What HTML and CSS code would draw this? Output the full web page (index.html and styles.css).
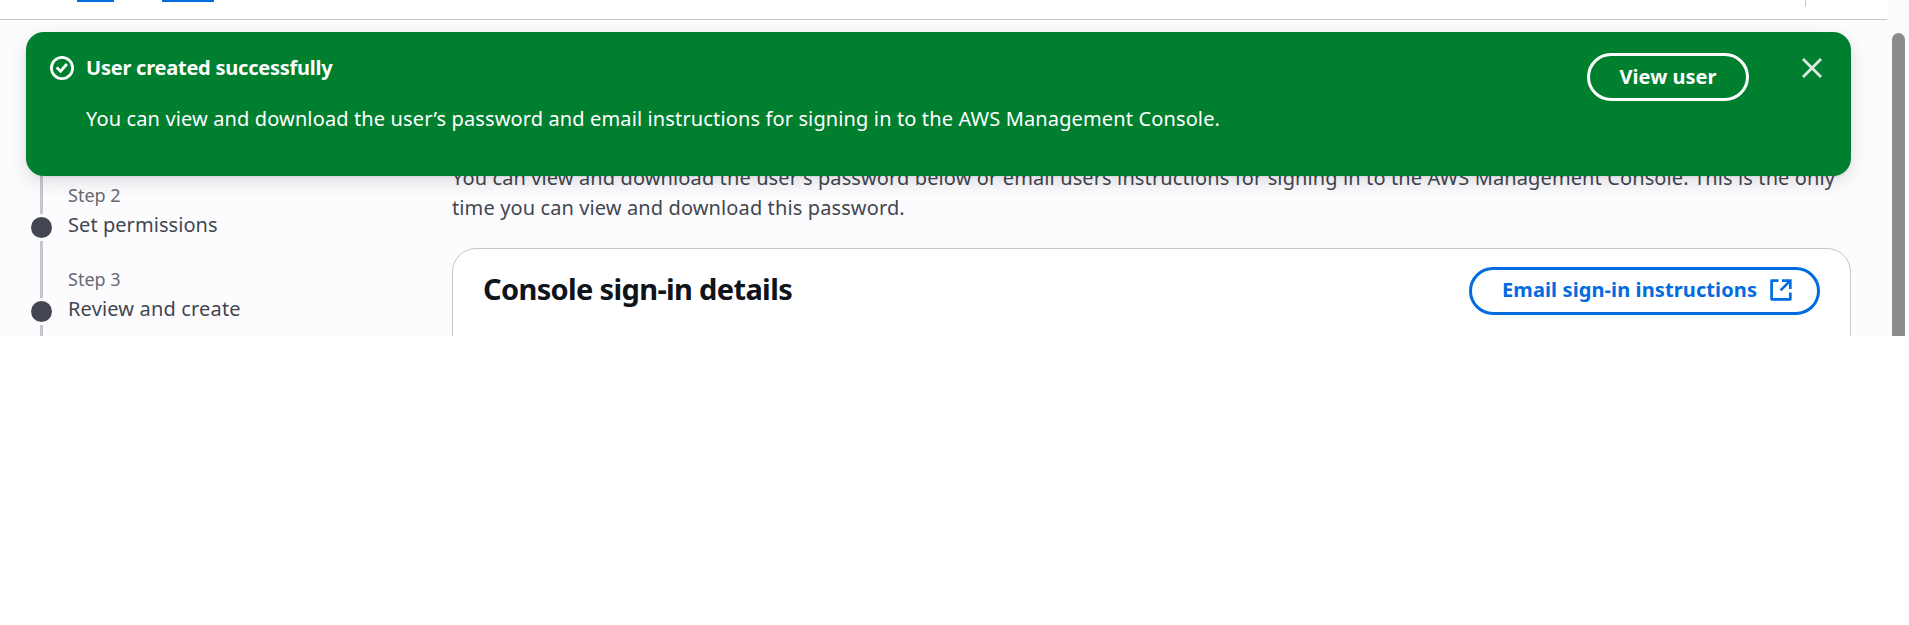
FILE: index.html
```html
<!DOCTYPE html>
<html lang="en">
<head>
<meta charset="utf-8">
<title>Create user</title>
<link rel="stylesheet" href="styles.css">
</head>
<body>
<div class="app">
  <div class="view">
    <header class="topbar">
      <div class="crumbs"><span class="underline underline-short"></span><span class="underline underline-long"></span></div>
      <span class="divider"></span>
    </header>
    <div class="content">
      <nav class="steps">
        <div class="step">
          <div class="marker"><span class="line"></span><span class="dot"></span></div>
          <div class="step-text"><span class="step-label">Step 2</span><span class="step-title">Set permissions</span></div>
        </div>
        <div class="step">
          <div class="marker"><span class="line"></span><span class="dot"></span></div>
          <div class="step-text"><span class="step-label">Step 3</span><span class="step-title step-title-wide">Review and create</span></div>
        </div>
        <div class="step">
          <div class="marker"><span class="line"></span></div>
        </div>
      </nav>
      <main class="main">
        <p class="intro">You can view and download the user's password below or email users instructions for signing in to the AWS Management Console. This is the only<br>time you can view and download this password.</p>
        <section class="card">
          <h2 class="card-title">Console sign-in details</h2>
          <button class="button button-link">
            <span>Email sign-in instructions</span>
            <svg class="icon-external" viewBox="0 0 24 24" width="24" height="24" fill="none" stroke="currentColor" stroke-width="2.7">
              <path d="M9.6 2.6H2.6V21.4H21.4V14.4" stroke-linejoin="round"/>
              <path d="M13 2.6H21.4V11M21.4 2.6L11.6 12.4"/>
            </svg>
          </button>
        </section>
      </main>
    </div>
    <div class="flash">
      <svg class="icon-success" viewBox="0 0 24 24" width="24" height="24" fill="none" stroke="currentColor">
        <circle cx="12" cy="12" r="10.6" stroke-width="2.7"/>
        <path d="M6.7 11.5L10.6 15.2L16.9 8" stroke-width="2.8"/>
      </svg>
      <div class="flash-text">
        <strong class="flash-title">User created successfully</strong>
        <span class="flash-message">You can view and download the user’s password and email instructions for signing in to the AWS Management Console.</span>
      </div>
      <button class="button button-flash">View user</button>
      <svg class="icon-close" viewBox="0 0 20 20" width="20" height="20" fill="none" stroke="currentColor" stroke-width="2.8">
        <path d="M1 1L19 19M19 1L1 19"/>
      </svg>
    </div>
  </div>
  <div class="scrollbar"><div class="thumb"></div></div>
</div>
</body>
</html>
```
FILE: styles.css
```css
* {
  box-sizing: border-box;
}

body {
  margin: 0;
  background: #fff;
  color: #424650;
  font: 20px/30px "Noto Sans", sans-serif;
}

.app {
  display: flex;
  height: 336px;
  overflow: hidden;
  background: #fcfcfe;
}

.view {
  position: relative;
  width: 1887px;
}

.topbar {
  display: flex;
  justify-content: space-between;
  height: 20px;
  padding: 0 81px 0 77px;
  background: #fff;
  border-bottom: 1px solid #c6c6cd;
}

.crumbs {
  display: flex;
  gap: 48px;
}

.underline {
  height: 2px;
  background: #006ce0;
}

.underline-short {
  width: 37px;
}

.underline-long {
  width: 52px;
}

.divider {
  width: 1px;
  height: 7px;
  background: #c6c6cd;
}

.content {
  display: flex;
  padding: 137px 36px 0 31px;
}

.steps {
  width: 421px;
}

.step {
  display: flex;
  gap: 16px;
  height: 84px;
}

.marker {
  display: flex;
  flex-direction: column;
  align-items: center;
  gap: 3px;
  width: 21px;
}

.line {
  width: 3px;
  height: 57px;
  background: #c6c6cd;
}

.dot {
  width: 21px;
  height: 21px;
  border-radius: 50%;
  background: #424650;
}

.step-text {
  display: flex;
  flex-direction: column;
  gap: 1px;
  padding-top: 25px;
}

.step-label {
  color: #656871;
  font-size: 18px;
  line-height: 27px;
  letter-spacing: 0;
}

.step-title {
  letter-spacing: 0.06px;
}

.step-title-wide {
  letter-spacing: 0.16px;
}

.main {
  width: 1399px;
  padding-top: 6px;
}

.intro {
  margin: 0 0 25px;
  letter-spacing: 0.115px;
  white-space: nowrap;
}

.card {
  display: flex;
  justify-content: space-between;
  align-items: flex-start;
  height: 200px;
  padding: 18px 30px;
  background: #fff;
  border: 1px solid #c6c6cd;
  border-radius: 24px;
}

.card-title {
  margin: 3px 0 0;
  color: #0f141a;
  font-size: 29px;
  line-height: 38px;
  letter-spacing: -0.65px;
}

.button {
  display: flex;
  align-items: center;
  height: 48px;
  margin: 0;
  border: 3px solid currentColor;
  border-radius: 30px;
  background: transparent;
  font: 700 20px/30px "Noto Sans", sans-serif;
  white-space: nowrap;
}

.button-link {
  gap: 12px;
  width: 351px;
  padding: 0 24px 2px 30px;
  color: #006ce0;
  letter-spacing: 0.11px;
}

.flash {
  position: absolute;
  top: 32px;
  left: 26px;
  display: flex;
  align-items: flex-start;
  width: 1825px;
  height: 144px;
  padding: 20px 29px 0 24px;
  border-radius: 18px;
  background: #00802f;
  box-shadow: 0 6px 18px rgba(0, 7, 22, 0.12), 0 1px 2px rgba(0, 7, 22, 0.08);
  color: #fff;
}

.icon-success {
  margin: 4px 12px 0 0;
}

.flash-text {
  display: flex;
  flex: 1;
  flex-direction: column;
  gap: 21px;
  padding-top: 1px;
}

.flash-title {
  letter-spacing: -0.23px;
}

.flash-message {
  letter-spacing: 0.13px;
  white-space: nowrap;
}

.button-flash {
  justify-content: center;
  width: 162px;
  margin: 1px 53px 0 0;
  padding: 0 0 1px;
  color: #fff;
}

.icon-close {
  margin-top: 6px;
  color: #dcebe1;
}

.scrollbar {
  flex: 1;
  padding: 33px 4px 0 5px;
}

.thumb {
  height: 400px;
  border-radius: 7px;
  background: #8b8b8b;
}
```
